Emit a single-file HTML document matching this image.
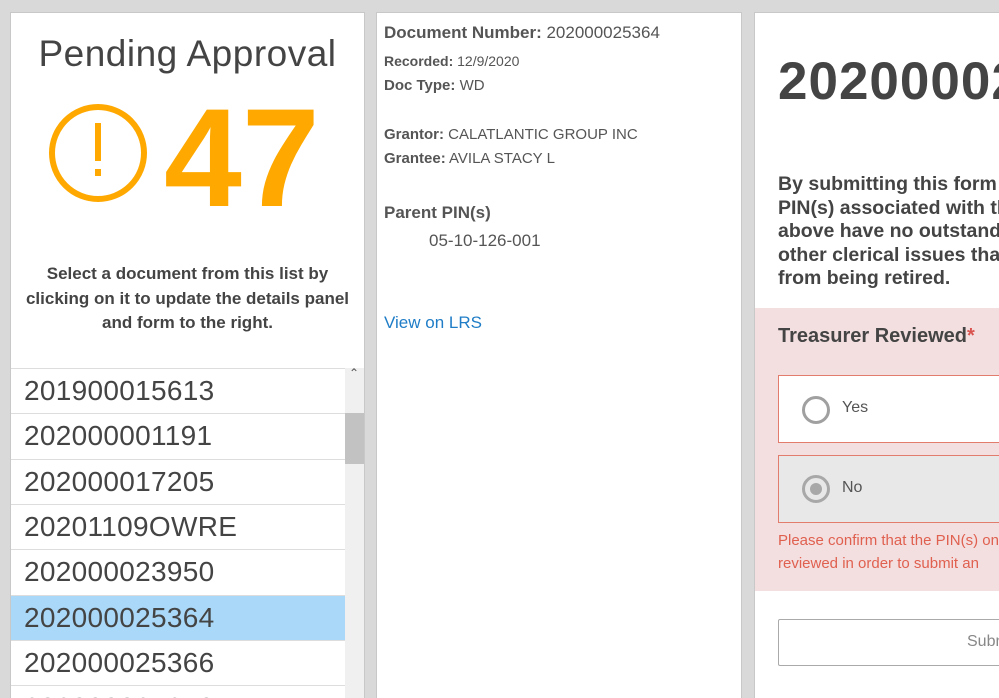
<!DOCTYPE html>
<html><head><style>
*{margin:0;padding:0;box-sizing:border-box}
html,body{width:999px;height:698px;overflow:hidden}
body{background:#d9d9d9;font-family:"Liberation Sans",sans-serif;color:#4a4a4a;position:relative}
.p{position:absolute;background:#fff;border:1px solid #c8c8c8;border-bottom:none;overflow:hidden}
.item{position:absolute;left:0;width:334px;height:45px;border-top:1px solid #ddd;font-size:28px;padding-left:13px;line-height:44px;color:#444;letter-spacing:0.3px}
.b{font-weight:bold}
</style></head><body>
<div class="p" style="left:10px;top:12px;width:355px;height:686px">
 <div style="position:absolute;top:20px;width:100%;text-align:center;font-size:37px;color:#444;letter-spacing:0.5px">Pending Approval</div>
 <svg style="position:absolute;left:35px;top:88px" width="104" height="104" viewBox="0 0 104 104"><circle cx="52" cy="52" r="46" fill="none" stroke="#ffa900" stroke-width="6"/><rect x="49" y="22" width="6" height="38" fill="#ffa900"/><rect x="49" y="68" width="6" height="7" fill="#ffa900"/></svg>
 <div style="position:absolute;left:153px;top:72px;font-size:140px;font-weight:bold;color:#ffa900;line-height:145px">47</div>
 <div style="position:absolute;top:249px;width:100%;text-align:center;font-size:17px;font-weight:bold;line-height:24.5px;color:#444">Select a document from this list by<br>clicking on it to update the details panel<br>and form to the right.</div>
 <div style="position:absolute;left:0;top:355px;width:355px;height:350px;overflow:hidden">
  <div class="item" style="top:0">201900015613</div>
  <div class="item" style="top:45px">202000001191</div>
  <div class="item" style="top:91px">202000017205</div>
  <div class="item" style="top:136px">20201109OWRE</div>
  <div class="item" style="top:181px">202000023950</div>
  <div class="item" style="top:227px;background:#aad8f8">202000025364</div>
  <div class="item" style="top:272px">202000025366</div>
  <div class="item" style="top:317px">202000025370</div>
  <div style="position:absolute;left:334px;top:0;width:20px;height:360px;background:#f0f0f0"></div>
  <div style="position:absolute;left:334px;top:45px;width:19px;height:51px;background:#c2c2c2"></div>
  <div style="position:absolute;left:338px;top:-2px;font-size:12px;color:#555">&#8963;</div>
 </div>
</div>
<div class="p" style="left:376px;top:12px;width:366px;height:686px;font-size:15px;color:#555">
 <div style="position:absolute;left:7px;top:10px;font-size:17px"><span class="b">Document Number:</span> 202000025364</div>
 <div style="position:absolute;left:7px;top:40px;font-size:14px"><span class="b">Recorded:</span> 12/9/2020</div>
 <div style="position:absolute;left:7px;top:64px;font-size:15px"><span class="b">Doc Type:</span> WD</div>
 <div style="position:absolute;left:7px;top:113px;font-size:15px"><span class="b">Grantor:</span> CALATLANTIC GROUP INC</div>
 <div style="position:absolute;left:7px;top:137px;font-size:15px"><span class="b">Grantee:</span> AVILA STACY L</div>
 <div style="position:absolute;left:7px;top:190px;font-size:17px" class="b">Parent PIN(s)</div>
 <div style="position:absolute;left:52px;top:218px;font-size:17px">05-10-126-001</div>
 <div style="position:absolute;left:7px;top:300px;font-size:17px;color:#1f7dc7">View on LRS</div>
</div>
<div class="p" style="left:754px;top:12px;width:250px;height:686px">
 <div style="position:absolute;left:23px;top:38px;font-size:53px;font-weight:bold;color:#444;white-space:nowrap;letter-spacing:1px">202000025364</div>
 <div style="position:absolute;left:23px;top:160px;font-size:19.5px;font-weight:bold;color:#444;line-height:23.5px;white-space:nowrap">By submitting this form you confirm<br>PIN(s) associated with this document<br>above have no outstanding taxes or<br>other clerical issues that prevent it<br>from being retired.</div>
 <div style="position:absolute;left:0;top:295px;width:260px;height:283px;background:#f3dfe0">
  <div style="position:absolute;left:23px;top:17px;font-size:20px;font-weight:bold;color:#444">Treasurer Reviewed<span style="color:#d9534f">*</span></div>
  <div style="position:absolute;left:23px;top:67px;width:240px;height:68px;background:#fff;border:1px solid #e27c6d"></div>
  <div style="position:absolute;left:47px;top:88px;width:28px;height:28px;border:3px solid #a0a0a0;border-radius:50%"></div>
  <div style="position:absolute;left:87px;top:91px;font-size:16px;color:#555">Yes</div>
  <div style="position:absolute;left:23px;top:147px;width:240px;height:68px;background:#e8e8e8;border:1px solid #e27c6d"></div>
  <div style="position:absolute;left:47px;top:167px;width:28px;height:28px;border:3px solid #a8a8a8;border-radius:50%"><div style="position:absolute;left:5px;top:5px;width:12px;height:12px;border-radius:50%;background:#a8a8a8"></div></div>
  <div style="position:absolute;left:87px;top:171px;font-size:16px;color:#555">No</div>
  <div style="position:absolute;left:23px;top:221px;font-size:15px;color:#e0604f;line-height:23px;white-space:nowrap">Please confirm that the PIN(s) on this<br>reviewed in order to submit an</div>
 </div>
 <div style="position:absolute;left:23px;top:606px;width:240px;height:47px;border:1px solid #aaa;border-radius:2px"></div>
 <div style="position:absolute;left:212px;top:620px;font-size:16px;color:#888">Submit</div>
</div>
</body></html>
